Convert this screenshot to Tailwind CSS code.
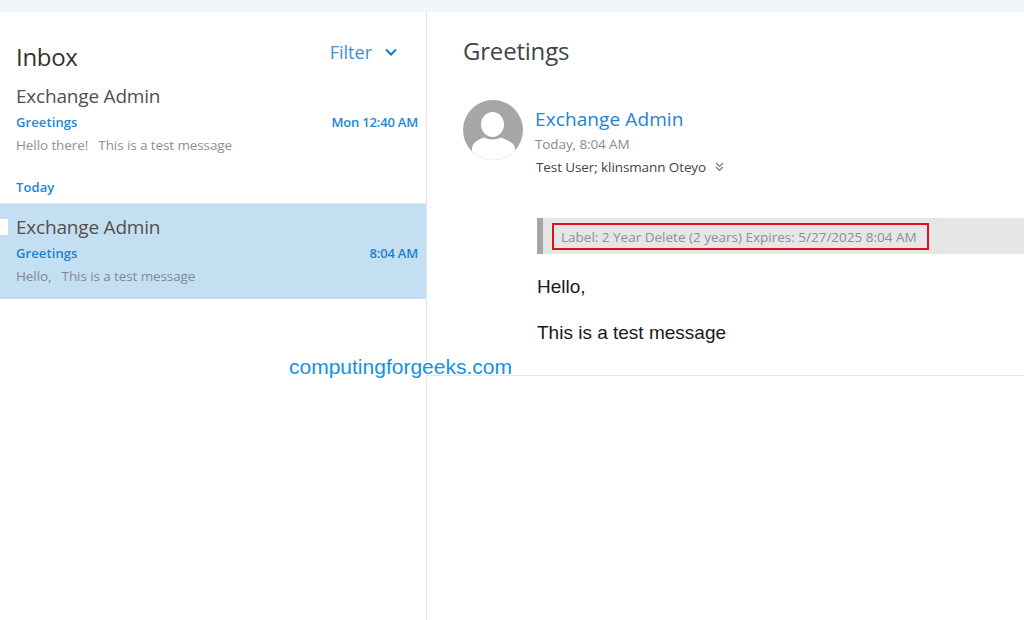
<!DOCTYPE html>
<html lang="en">
  <head>
    <meta charset="UTF-8" />
    <title>Inbox</title>
    <script src="https://cdn.jsdelivr.net/npm/@tailwindcss/browser@4"></script>
  </head>
  <body class="relative w-[1024px] h-[620px] overflow-hidden bg-white font-['Open_Sans',sans-serif]">
    <div class="h-3 bg-[#eff6fc]"></div>
    <div class="flex h-[608px]">
      <!-- message list -->
      <div class="w-[427px] shrink-0 border-r border-[#e6e6e6]">
        <div class="flex justify-between pl-4 pr-[29px] pt-[27px] h-[71px]">
          <h1 class="text-[24px] leading-[36px] text-[#333] tracking-[-0.3px]">Inbox</h1>
          <div class="flex items-start gap-[13px]">
            <span class="text-[18px] leading-[27px] text-[#3a8fd6]">Filter</span>
            <svg class="mt-[9px]" width="12" height="8" viewBox="0 0 12 8" fill="none" stroke="#0f78d4" stroke-width="2"><path d="M1 1.5l5 5 5-5" /></svg>
          </div>
        </div>
        <div class="h-[74px] pl-4 pr-2">
          <div class="text-[19px] leading-[26px] text-[#505050] tracking-[-0.2px]">Exchange Admin</div>
          <div class="flex justify-between mt-[3px] text-[13px] leading-[20px] font-semibold text-[#1e86d8] tracking-[-0.2px]">
            <span class="tracking-[0.1px]">Greetings</span><span>Mon 12:40 AM</span>
          </div>
          <div class="mt-[3px] text-[13.5px] leading-[20px] text-[#8f8f8f] tracking-[-0.1px] whitespace-pre">Hello there!   This is a test message</div>
        </div>
        <div class="h-[46px] pt-[20px] pl-4 text-[13px] leading-[20px] font-semibold text-[#1e86d8] tracking-[0.1px]">Today</div>
        <div class="relative h-[96px] pl-4 pr-2 pt-[10px] bg-[#c5dff2] border-t border-[#dbe9f4]">
          <div class="absolute left-0 top-[15px] w-2 h-[16px] bg-white"></div>
          <div class="text-[19px] leading-[26px] text-[#505050] tracking-[-0.2px]">Exchange Admin</div>
          <div class="flex justify-between mt-[3px] text-[13px] leading-[20px] font-semibold text-[#1e7fd2] tracking-[-0.2px]">
            <span class="tracking-[0.1px]">Greetings</span><span>8:04 AM</span>
          </div>
          <div class="mt-[3px] text-[13.5px] leading-[20px] text-[#7f8a94] tracking-[-0.1px] whitespace-pre">Hello,   This is a test message</div>
        </div>
      </div>
      <!-- reading pane -->
      <div class="flex-1 min-w-0">
        <h2 class="pl-[36px] pt-[21px] text-[24px] leading-[36px] text-[#444] tracking-[-0.2px]">Greetings</h2>
        <div class="flex pl-[36px] mt-[31px] gap-3">
          <svg class="shrink-0" width="60" height="60" viewBox="0 0 60 60">
            <defs><clipPath id="avatar-clip"><circle cx="30" cy="30" r="30" /></clipPath></defs>
            <circle cx="30" cy="30" r="30" fill="#a6a6a6" />
            <g clip-path="url(#avatar-clip)">
              <ellipse cx="29.5" cy="24.5" rx="11.5" ry="12.5" fill="#fff" />
              <path d="M9 60 L9 48 C10 42 15 40 21 37.5 C26 40 33 40 38 37.5 C44 40 51 42 52 48 L52 60Z" fill="#fff" />
            </g>
          </svg>
          <div>
            <div class="mt-[5px] text-[19px] leading-[28px] text-[#2383d6] tracking-[0.1px]">Exchange Admin</div>
            <div class="mt-[1px] text-[13.5px] leading-[20px] text-[#8a8a8a] tracking-[-0.1px]">Today, 8:04 AM</div>
            <div class="flex items-center gap-[9px] mt-[3px] pl-px text-[13.5px] leading-[20px] text-[#444] tracking-[-0.1px]">
              <span>Test User; klinsmann Oteyo</span>
              <svg width="9" height="10" viewBox="0 0 9 10" fill="none" stroke="#777" stroke-width="1.2"><path d="M1 1l3.5 3.5L8 1M1 5l3.5 3.5L8 5" /></svg>
            </div>
          </div>
        </div>
        <div class="ml-[110px] mt-[41px] h-[36px] flex items-start pt-[5px] pl-[9px] bg-[#e6e6e6] border-l-[6px] border-[#a6a6a6]">
          <div class="h-[27px] w-[377px] border-2 border-[#e2101c] pl-[7px] text-[13.5px] leading-[24px] text-[#8f8f8f] whitespace-nowrap">Label: 2 Year Delete (2 years) Expires: 5/27/2025 8:04 AM</div>
        </div>
        <div class="ml-[110px] mt-[21px] font-['Liberation_Sans',sans-serif] text-[19px] leading-[24px] text-[#1a1a1a]">
          <p>Hello,</p>
          <p class="mt-[22px]">This is a test message</p>
        </div>
        <div class="mt-[30px] border-t border-[#e6e6e6]"></div>
      </div>
    </div>
    <div class="absolute left-[289px] top-[354px] font-['Liberation_Sans',sans-serif] text-[21px] leading-[26px] text-[#1592e6]">computingforgeeks.com</div>
  </body>
</html>
